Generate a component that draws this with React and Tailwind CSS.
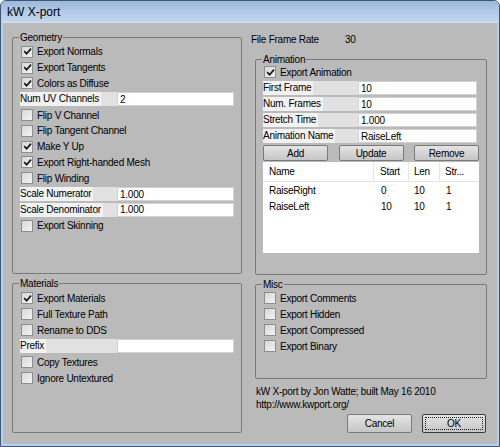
import React from 'react';

function Check({ checked }) {
    return (
        <span className="flex h-[12px] w-[12px] shrink-0 items-center justify-center border border-[#8e8e8e] bg-gradient-to-br from-[#d6d6d6] to-[#f4f4f4]">
            {checked && (
                <svg width="9" height="9" viewBox="0 0 9 9">
                    <path d="M1.2 4.2 L3.6 6.8 L8 1.6" fill="none" stroke="#151515" strokeWidth="1.7" />
                </svg>
            )}
        </span>
    );
}

function CheckRow({ label, checked, rowClass }) {
    return (
        <div className={`flex items-center gap-[4px] pl-[1px] ${rowClass}`}>
            <Check checked={checked} />
            <span>{label}</span>
        </div>
    );
}

function FieldRow({ label, value, labelClass, rowClass }) {
    return (
        <div className={`flex items-center ${rowClass}`}>
            <div className={`flex h-[14px] shrink-0 items-center bg-[#e1e1e1] ${labelClass}`}>
                <span className="bg-[#f2f2f2] pr-[2px] leading-[14px]">{label}</span>
            </div>
            <div className="flex h-[14px] flex-1 items-center border border-[#d2d2d2] bg-white pl-[2px]">
                {value}
            </div>
        </div>
    );
}

function Group({ title, className, children }) {
    return (
        <fieldset className={`rounded-[2px] border border-[#7a7a7a] px-[7px] ${className}`}>
            <legend className="ml-[-1px] px-[1px] leading-[11px]">{title}</legend>
            {children}
        </fieldset>
    );
}

function PushButton({ label, focused, className }) {
    return (
        <button
            className={`flex items-center justify-center rounded-[2px] border bg-gradient-to-b from-[#e4e4e4] to-[#c6c6c6] p-[2px] ${focused ? 'border-[#3a3a3a]' : 'border-[#7a7a7a]'} ${className}`}
        >
            <span className={`flex h-full flex-1 items-center justify-center border border-dotted ${focused ? 'border-[#1e1e1e]' : 'border-transparent'}`}>
                {label}
            </span>
        </button>
    );
}

export default function App() {
    const geo = 'h-[15.8px]';
    const row = 'h-[16px]';

    const animations = [
        { name: 'RaiseRight', start: 0, len: 10, str: 1 },
        { name: 'RaiseLeft', start: 10, len: 10, str: 1 },
    ];

    return (
        <div className="flex h-[447px] w-[500px] flex-col overflow-hidden rounded-t-[6px] border border-[#3e5574] bg-[#b7cfe9] font-['Liberation_Sans',Arial,sans-serif] text-[10px] tracking-[-0.25px] text-black">
            {/* TITLE */}
            <div className="flex h-[21px] shrink-0 items-center bg-gradient-to-b from-[#9db8da] via-[#b2cae6] to-[#c2d7ed] pl-[6px] text-[12px] tracking-normal">
                kW X-port
            </div>

            {/* BODY */}
            <div className="mx-[2px] mb-[2px] flex flex-1 border-t border-[#d5e2f0] bg-[#bababa]">

                {/* LEFT COLUMN */}
                <div className="ml-[9px] flex w-[230px] flex-col">
                    <Group title="Geometry" className="mt-[9px] h-[242px]">
                        <div className="pt-[1px]">
                            <CheckRow label="Export Normals" checked rowClass={geo} />
                            <CheckRow label="Export Tangents" checked rowClass={geo} />
                            <CheckRow label="Colors as Diffuse" checked rowClass={geo} />
                            <FieldRow label="Num UV Channels" value="2" labelClass="w-[97px]" rowClass={geo} />
                            <CheckRow label="Flip V Channel" rowClass={geo} />
                            <CheckRow label="Flip Tangent Channel" rowClass={geo} />
                            <CheckRow label="Make Y Up" checked rowClass={geo} />
                            <CheckRow label="Export Right-handed Mesh" checked rowClass={geo} />
                            <CheckRow label="Flip Winding" rowClass={geo} />
                            <FieldRow label="Scale Numerator" value="1.000" labelClass="w-[97px]" rowClass={geo} />
                            <FieldRow label="Scale Denominator" value="1.000" labelClass="w-[97px]" rowClass={geo} />
                            <CheckRow label="Export Skinning" rowClass={geo} />
                        </div>
                    </Group>

                    <Group title="Materials" className="mt-[4px] h-[155px]">
                        <div className="pt-[1px]">
                            <CheckRow label="Export Materials" checked rowClass={row} />
                            <CheckRow label="Full Texture Path" rowClass={row} />
                            <CheckRow label="Rename to DDS" rowClass={row} />
                            <FieldRow label="Prefix" value="" labelClass="w-[97px]" rowClass={row} />
                            <CheckRow label="Copy Textures" rowClass={row} />
                            <CheckRow label="Ignore Untextured" rowClass={row} />
                        </div>
                    </Group>
                </div>

                {/* RIGHT COLUMN */}
                <div className="ml-[9px] flex w-[237px] flex-col">
                    <div className="mt-[8px] flex h-[16px] items-center">
                        <span className="w-[94px]">File Frame Rate</span>
                        <span>30</span>
                    </div>

                    <Group title="Animation" className="ml-[4px] mt-[7px] h-[221px] w-[232px]">
                        <div className="-mt-[1px] pr-[2px]">
                            <CheckRow label="Export Animation" checked rowClass={row} />
                            <FieldRow label="First Frame" value="10" labelClass="w-[95px]" rowClass={row} />
                            <FieldRow label="Num. Frames" value="10" labelClass="w-[95px]" rowClass={row} />
                            <FieldRow label="Stretch Time" value="1.000" labelClass="w-[95px]" rowClass={row} />
                            <FieldRow label="Animation Name" value="RaiseLeft" labelClass="w-[95px]" rowClass={row} />
                        </div>

                        <div className="mt-[1px] flex justify-between">
                            <PushButton label="Add" className="h-[16px] w-[65px]" />
                            <PushButton label="Update" className="h-[16px] w-[65px]" />
                            <PushButton label="Remove" className="h-[16px] w-[65px]" />
                        </div>

                        <div className="mt-[1px] h-[91px] bg-white">
                            <div className="flex h-[20px] border-b border-[#e2e2e2]">
                                <div className="flex w-[111px] items-center border-r border-[#e6e6e6] pl-[6px]">Name</div>
                                <div className="flex w-[35px] items-center border-r border-[#e6e6e6] pl-[6px]">Start</div>
                                <div className="flex w-[31px] items-center border-r border-[#e6e6e6] pl-[5px]">Len</div>
                                <div className="flex flex-1 items-center pl-[5px]">Str...</div>
                            </div>
                            {animations.map((a) => (
                                <div key={a.name} className="flex h-[16px] items-center">
                                    <div className="w-[111px] pl-[6px]">{a.name}</div>
                                    <div className="w-[35px] pl-[7px]">{a.start}</div>
                                    <div className="w-[31px] pl-[5px]">{a.len}</div>
                                    <div className="flex-1 pl-[6px]">{a.str}</div>
                                </div>
                            ))}
                        </div>
                    </Group>

                    <Group title="Misc" className="ml-[4px] mt-[4px] h-[100px] w-[232px]">
                        <div>
                            <CheckRow label="Export Comments" rowClass={row} />
                            <CheckRow label="Export Hidden" rowClass={row} />
                            <CheckRow label="Export Compressed" rowClass={row} />
                            <CheckRow label="Export Binary" rowClass={row} />
                        </div>
                    </Group>

                    <div className="ml-[5px] mt-[6px] leading-[13px]">
                        <div>kW X-port by Jon Watte; built May 16 2010</div>
                        <div>http://www.kwport.org/</div>
                    </div>

                    <div className="mr-[2px] mt-[3px] flex justify-end gap-[10px]">
                        <PushButton label="Cancel" className="h-[19px] w-[65px]" />
                        <PushButton label="OK" focused className="h-[19px] w-[64px]" />
                    </div>
                </div>
            </div>
        </div>
    );
}
